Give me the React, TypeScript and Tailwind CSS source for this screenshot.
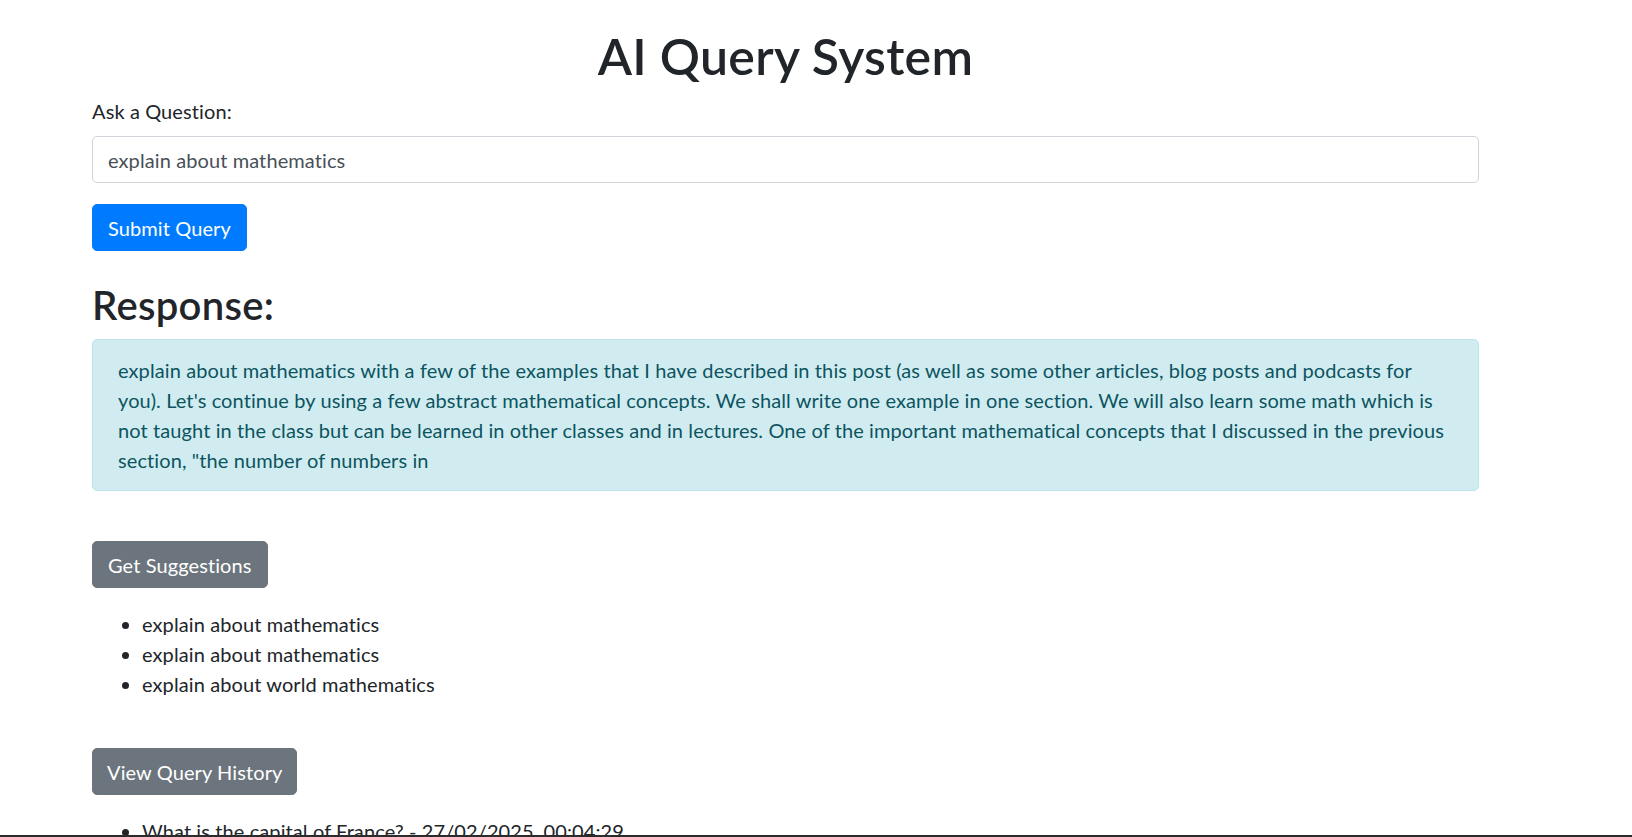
import React, { useState } from 'react';

const responseText =
  'explain about mathematics with a few of the examples that I have described in this post (as well as some other articles, blog posts and podcasts for you). Let\'s continue by using a few abstract mathematical concepts. We shall write one example in one section. We will also learn some math which is not taught in the class but can be learned in other classes and in lectures. One of the important mathematical concepts that I discussed in the previous section, "the number of numbers in';

const suggestions = [
  'explain about mathematics',
  'explain about mathematics',
  'explain about world mathematics',
];

const history = [
  { query: 'What is the capital of France?', time: '27/02/2025, 00:04:29' },
  { query: 'explain about mathematics', time: '27/02/2025, 00:06:12' },
];

export default function App() {
  const [query, setQuery] = useState('explain about mathematics');

  return (
    <div className="min-h-screen bg-white font-['Lato',sans-serif] text-[20px] leading-[30px] tracking-[0.1px] text-[#212529]">
      <div className="ml-[92px] w-[1387px] pt-[26px]">
        <h1 className="mb-[10px] text-center text-[50px] leading-[60px] font-semibold tracking-[0.3px]">AI Query System</h1>

        <label className="mb-[10px] block">Ask a Question:</label>
        <input
          value={query}
          onChange={(e) => setQuery(e.target.value)}
          className="mb-[21px] block h-[47px] w-full rounded-[5px] border border-[#ced4da] bg-white px-[15px] text-[#495057] outline-none"
        />

        <button className="h-[47px] rounded-[5px] border border-[#007bff] bg-[#007bff] px-[15px] text-white">
          Submit Query
        </button>

        <h2 className="mt-[30px] mb-[10px] text-[40px] leading-[48px] font-semibold tracking-[0.3px]">Response:</h2>
        <div className="rounded-[5px] border border-[#bee5eb] bg-[#d1ecf1] px-[25px] py-[15px] text-[#0c5460]">
          {responseText}
        </div>

        {/* suggestions */}
        <button className="mt-[50px] h-[47px] rounded-[5px] border border-[#6c757d] bg-[#6c757d] px-[15px] text-white">
          Get Suggestions
        </button>
        <ul className="mt-[21px] list-disc pl-[50px]">
          {suggestions.map((s, i) => (
            <li key={i}>{s}</li>
          ))}
        </ul>

        {/* history */}
        <button className="mt-[49px] h-[47px] rounded-[5px] border border-[#6c757d] bg-[#6c757d] px-[14px] text-white">
          View Query History
        </button>
        <ul className="mt-[21px] list-disc pl-[50px]">
          {history.map((h, i) => (
            <li key={i}>
              {h.query} - {h.time}
            </li>
          ))}
        </ul>
      </div>

      <div className="fixed inset-x-0 bottom-0 h-[2px] bg-[#2b2b2b]" />
    </div>
  );
}
